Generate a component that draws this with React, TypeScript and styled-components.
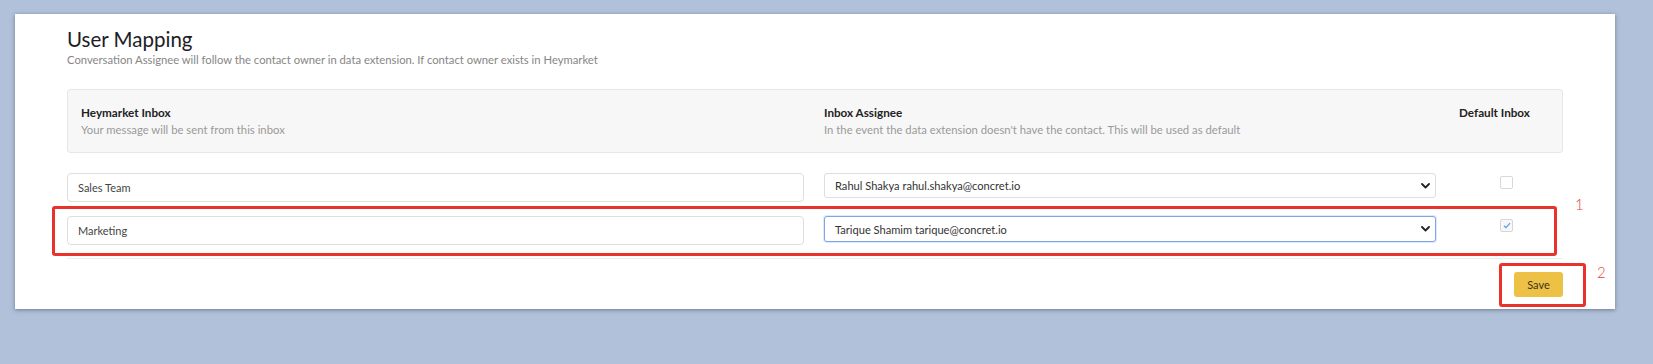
import React from "react";
import styled, { createGlobalStyle } from "styled-components";

const GlobalStyle = createGlobalStyle`
  html, body { margin: 0; padding: 0; }
  body {
    background: #b1c1da;
    font-family: Lato, "Open Sans", "Liberation Sans", sans-serif;
    color: #222;
  }
  * { box-sizing: border-box; }
`;

const Page = styled.div`
  padding: 14px 38px 54px 15px;
`;

const Card = styled.section`
  background: #fff;
  box-shadow: 0 1px 4px rgba(40, 50, 70, 0.5);
  padding: 12px 52px 12px 52px;
`;

const Title = styled.h1`
  margin: 0;
  font-size: 20.5px;
  line-height: 26px;
  font-weight: 400;
  color: #1d1d26;
`;

const Subtitle = styled.p`
  margin: 0;
  font-size: 11.25px;
  line-height: 16px;
  color: #868686;
`;

const Grid = styled.div`
  display: grid;
  grid-template-columns: minmax(0, 737fr) minmax(0, 612fr) 107px;
  column-gap: 20px;
`;

const HeaderBox = styled(Grid)`
  margin-top: 21px;
  padding: 14px 0;
  background: #f7f7f7;
  border-radius: 4px;
  box-shadow: inset 0 0 0 1px #e7e7e7;
`;

const HeadCell = styled.div<{ $pad?: number }>`
  padding-left: ${(p) => p.$pad ?? 0}px;
`;

const HeadTitle = styled.div`
  font-size: 11.7px;
  line-height: 18px;
  font-weight: 700;
  color: #222;
`;

const HeadDesc = styled.div`
  font-size: 11.3px;
  line-height: 18px;
  color: #9a9a9a;
`;

const Rows = styled.div`
  margin-top: 20px;
  display: flex;
  flex-direction: column;
  gap: 14px;
`;

const Row = styled(Grid)`
  position: relative;
  align-items: start;
`;

const TextInput = styled.input`
  height: 29px;
  width: 100%;
  border: 1px solid #dedede;
  border-radius: 4px;
  padding: 0 10px;
  font-family: inherit;
  font-size: 11px;
  color: #444;
  background: #fff;
  outline: none;
`;

const SelectWrap = styled.div`
  position: relative;
`;

const SelectBox = styled.div<{ $focused?: boolean }>`
  height: ${(p) => (p.$focused ? 26 : 25)}px;
  border: 1px solid ${(p) => (p.$focused ? "#7ea6e6" : "#dedede")};
  box-shadow: ${(p) => (p.$focused ? "0 0 0 1px rgba(126,166,230,0.25)" : "none")};
  border-radius: 3px;
  padding: 0 24px 0 10px;
  display: flex;
  align-items: center;
  font-size: 11.1px;
  color: #333;
  background: #fff;
`;

const Chevron = styled.svg`
  position: absolute;
  right: 6px;
  top: 50%;
  transform: translateY(-50%);
  width: 9px;
  height: 6px;
`;

const CheckCell = styled.div`
  padding: 3px 0 0 44px;
`;

const Checkbox = styled.span<{ $checked?: boolean }>`
  display: flex;
  align-items: center;
  justify-content: center;
  width: 13px;
  height: 13px;
  border: 1px solid ${(p) => (p.$checked ? "#d6d6d6" : "#d9d9d9")};
  border-radius: 2px;
  background: ${(p) => (p.$checked ? "#f7f7f7" : "#fff")};
`;

const Annotation = styled.div<{ $t: number; $r: number; $b: number; $l: number }>`
  position: absolute;
  top: ${(p) => p.$t}px;
  right: ${(p) => p.$r}px;
  bottom: ${(p) => p.$b}px;
  left: ${(p) => p.$l}px;
  border: 3px solid #e8322b;
  border-radius: 3px;
  pointer-events: none;
`;

const AnnoLabel = styled.span<{ $t: number; $l: string }>`
  position: absolute;
  top: ${(p) => p.$t}px;
  left: ${(p) => p.$l};
  font-size: 15px;
  line-height: 16px;
  font-weight: 300;
  color: #e8403a;
`;

const Divider = styled.div`
  margin-top: 13px;
  height: 1px;
  background: #ededed;
`;

const Footer = styled.div`
  margin-top: 13px;
  display: flex;
  justify-content: flex-end;
`;

const SaveWrap = styled.div`
  position: relative;
`;

const SaveButton = styled.button`
  width: 49px;
  height: 25px;
  border: none;
  border-radius: 3px;
  background: #ecc146;
  color: #3d3418;
  font-family: inherit;
  font-size: 11px;
  padding: 0;
`;

const ChevronIcon = () => (
  <Chevron viewBox="0 0 9 6">
    <path d="M1 1 L4.5 4.5 L8 1" fill="none" stroke="#222" strokeWidth="1.8" strokeLinecap="round" strokeLinejoin="round" />
  </Chevron>
);

type Mapping = { inbox: string; assignee: string; checked: boolean; focused: boolean };

const mappings: Mapping[] = [
  { inbox: "Sales Team", assignee: "Rahul Shakya rahul.shakya@concret.io", checked: false, focused: false },
  { inbox: "Marketing", assignee: "Tarique Shamim tarique@concret.io", checked: true, focused: true },
];

export default function App() {
  return (
    <>
      <GlobalStyle />
      <Page>
        <Card>
          <Title>User Mapping</Title>
          <Subtitle>
            Conversation Assignee will follow the contact owner in data extension. If contact owner exists in Heymarket
          </Subtitle>

          <HeaderBox>
            <HeadCell $pad={14}>
              <HeadTitle>Heymarket Inbox</HeadTitle>
              <HeadDesc>Your message will be sent from this inbox</HeadDesc>
            </HeadCell>
            <HeadCell>
              <HeadTitle>Inbox Assignee</HeadTitle>
              <HeadDesc>In the event the data extension doesn't have the contact. This will be used as default</HeadDesc>
            </HeadCell>
            <HeadCell $pad={3}>
              <HeadTitle>Default Inbox</HeadTitle>
            </HeadCell>
          </HeaderBox>

          <Rows>
            {mappings.map((m, i) => (
              <Row key={m.inbox}>
                <TextInput defaultValue={m.inbox} readOnly />
                <SelectWrap>
                  <SelectBox $focused={m.focused}>{m.assignee}</SelectBox>
                  <ChevronIcon />
                </SelectWrap>
                <CheckCell>
                  <Checkbox $checked={m.checked}>
                    {m.checked && (
                      <svg width="8" height="7" viewBox="0 0 8 7">
                        <path d="M1 3.8 L3 5.6 L7 1.2" fill="none" stroke="#5b97ea" strokeWidth="1.2" />
                      </svg>
                    )}
                  </Checkbox>
                </CheckCell>
                {i === 1 && (
                  <>
                    <Annotation $t={-10} $r={6} $b={-11} $l={-15} />
                    <AnnoLabel $t={-20} $l="calc(100% + 12px)">1</AnnoLabel>
                  </>
                )}
              </Row>
            ))}
          </Rows>

          <Divider />

          <Footer>
            <SaveWrap>
              <SaveButton>Save</SaveButton>
              <Annotation $t={-9} $r={-23} $b={-10} $l={-15} />
              <AnnoLabel $t={-8} $l="calc(100% + 34px)">2</AnnoLabel>
            </SaveWrap>
          </Footer>
        </Card>
      </Page>
    </>
  );
}
